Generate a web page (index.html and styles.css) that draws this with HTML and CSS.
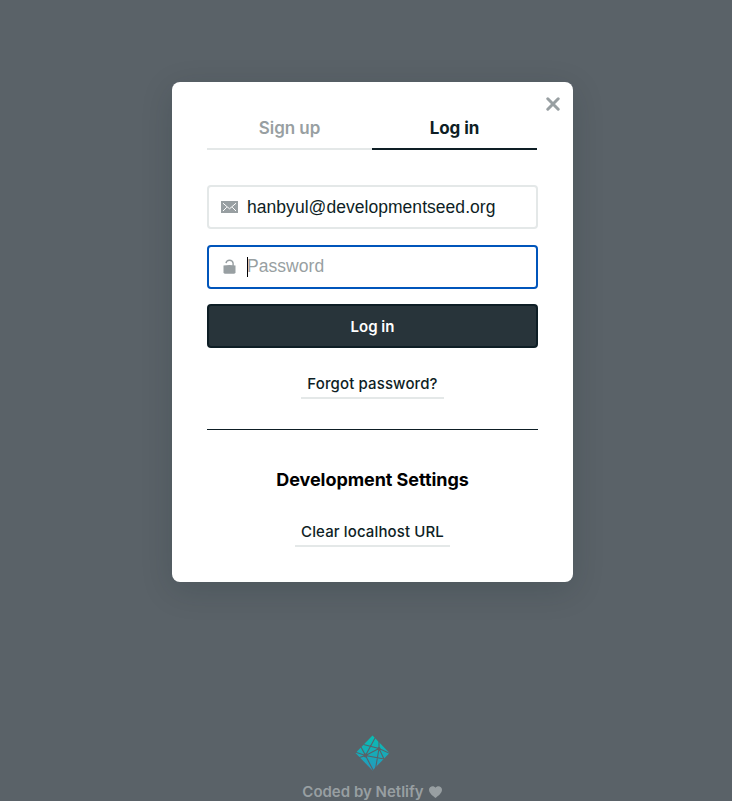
FILE: index.html
```html
<!DOCTYPE html>
<html lang="en">
<head>
<meta charset="utf-8">
<title>Log in</title>
<link rel="stylesheet" href="styles.css">
</head>
<body>
<main class="modal">
  <button class="close" aria-label="Close"><svg width="14" height="14" viewBox="0 0 14 14"><path d="M1.800 1.800 12.200 12.200M12.200 1.800 1.800 12.200" stroke="currentColor" stroke-width="3" stroke-linecap="round"/></svg></button>
  <nav class="tabs">
    <button class="tab">Sign up</button>
    <button class="tab active">Log in</button>
  </nav>
  <form class="form">
    <label class="field">
      <svg class="icon" width="17" height="12" viewBox="0 0 17 12"><path fill="currentColor" d="M0 0h17v12H0z"/><path d="M2 2.200 8.500 7.800 15 2.200M2 10l3.800-3.800M15 10l-3.800-3.800" fill="none" stroke="#fff" stroke-width="1"/></svg>
      <span class="value">hanbyul@developmentseed.org</span>
    </label>
    <label class="field focused">
      <svg class="icon" width="17" height="16" viewBox="0 0 17 16"><path d="M5 4.200a3.600 3.600 0 0 1 7.100 0v3" fill="none" stroke="currentColor" stroke-width="1.400"/><path fill="currentColor" d="M2.500 6.500q6-1.200 12 0v6.800q0 1.400-1.400 1.400H3.900q-1.400 0-1.400-1.400z"/></svg>
      <span class="caret"></span><span class="value placeholder">Password</span>
    </label>
    <button class="submit" type="button">Log in</button>
  </form>
  <button class="link forgot">Forgot password?</button>
  <hr class="rule">
  <h2 class="heading">Development Settings</h2>
  <button class="link clear">Clear localhost URL</button>
</main>
<footer class="credit">
  <svg class="logo" width="35" height="36" viewBox="0 0 35 36">
    <defs><linearGradient id="g" x1="0" y1="0" x2="0" y2="1"><stop offset="0" stop-color="#08bdb2"/><stop offset="1" stop-color="#2599bd"/></linearGradient></defs>
    <path fill="url(#g)" d="M17.500.500 34.500 18 17.500 35.500.500 18z"/>
    <g stroke="#5a6268" stroke-width="1.100" fill="none"><path d="M8.500 9.500 24 13.500 35 18.500M24 13.500V6M24 13.500 10.500 20.500M24 13.500 20.500 34M10.500 20.500 20 3M10.500 20.500 0 17M10.500 20.500 29 24M10.500 20.500 18 35M10.500 20.500 3 23M10.500 20.500 6 12M24 13.500 29 24"/></g>
    <circle cx="10.500" cy="20.500" r="2" fill="#5a6268"/><circle cx="24" cy="13.500" r="1.500" fill="#5a6268"/>
  </svg>
  <p class="byline"><span>Coded by Netlify</span><svg width="13" height="12" viewBox="0 0 13 12"><path fill="currentColor" d="M6.500 12C4 10 0 7.200 0 3.800 0 .4 4.500-1.200 6.500 1.800 8.500-1.200 13 .4 13 3.800 13 7.200 9 10 6.500 12z"/></svg></p>
</footer>
</body>
</html>
```
FILE: styles.css
```css
* { box-sizing: border-box; }
body {
  margin: 0;
  height: 801px;
  overflow: hidden;
  padding-top: 82px;
  padding-left: 172px;
  background: #5a6268;
  color: #0e1e25;
  font-family: Inter, "Liberation Sans", sans-serif;
}
button { font: inherit; color: inherit; background: none; border: 0; padding: 0; }
.modal {
  position: relative;
  width: 401px;
  height: 500px;
  padding: 24px 35px 0;
  display: flex;
  flex-direction: column;
  background: #fff;
  border-radius: 8px;
  box-shadow: 0 8px 32px rgba(14, 30, 37, .16);
}
.close { position: absolute; top: 15px; right: 13px; width: 14px; height: 14px; color: #989fa2; }
.close svg { display: block; }
.tabs { display: flex; width: 330px; height: 44px; }
.tab {
  flex: 1;
  padding-top: 2px;
  border-bottom: 2px solid #e4e8e8;
  color: #989fa2;
  font-size: 17px;
  font-weight: 600;
  letter-spacing: -.05px;
}
.tab.active { color: #0e1e25; border-color: #0e1e25; font-weight: 700; letter-spacing: -.05px; }
.form { display: flex; flex-direction: column; margin-top: 35px; }
.field {
  display: flex;
  align-items: center;
  height: 44px;
  margin-bottom: 16px;
  padding-left: 12px;
  border: 2px solid #e4e8e8;
  border-radius: 4px;
}
.focused { margin-bottom: 15px; border-color: #0055bb; }
.icon { color: #989fa2; margin-right: 9px; }
.value { font: 17.500px/22px "Liberation Sans", sans-serif; letter-spacing: .04px; }
.placeholder { color: #989fa2; position: relative; top: -1px; }
.caret { width: 1px; height: 20px; margin-right: -1px; background: #000; }
.submit {
  height: 44px;
  border: 2px solid #0e1e25;
  border-radius: 4px;
  background: #28343a;
  color: #fff;
  font-size: 15px;
  font-weight: 600;
}
.link {
  align-self: center;
  height: 26px;
  padding: 0 0 3px;
  border-bottom: 2px solid #e4e8e8;
  font-size: 15px;
  font-weight: 500;
  line-height: 19px;
  letter-spacing: .12px;
  white-space: nowrap;
}
.forgot { margin-top: 25px; width: 143px; }
.rule { width: 331px; margin: 30px 0 0; border: 0; border-top: 1px solid #0e1e25; }
.heading { margin: 38px 0 0; color: #000; font-size: 18px; line-height: 24px; font-weight: 700; letter-spacing: -.06px; text-align: center; white-space: nowrap; }
.clear { margin-top: 29px; width: 155px; }
.credit { width: 401px; margin-top: 153px; display: flex; flex-direction: column; align-items: center; color: #989fa2; }
.logo { display: block; margin-right: 1px; }
.byline { display: flex; align-items: center; gap: 5px; margin: 11px 0 0; padding-right: 1px; font-size: 15px; font-weight: 600; line-height: 20px; white-space: nowrap; }
```
